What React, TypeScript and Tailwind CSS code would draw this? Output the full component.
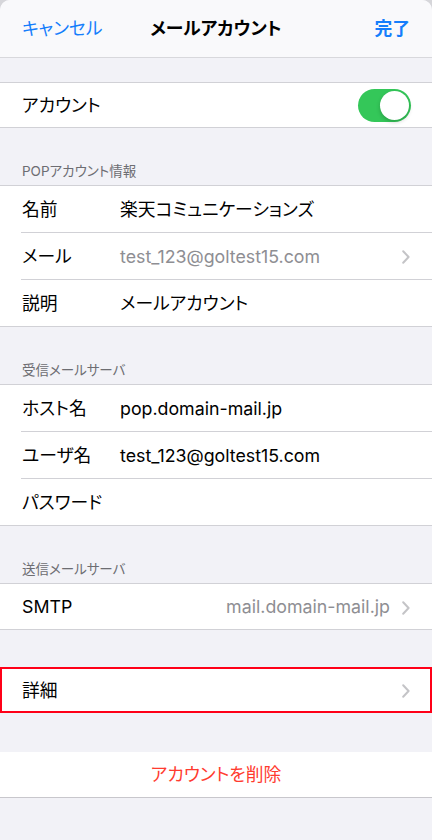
import React from "react";

const font = "[font-family:Inter,'Noto_Sans_CJK_JP',sans-serif] [font-feature-settings:'palt']";

function Chevron() {
  return (
    <svg width="8" height="14" viewBox="0 0 8 14" className="shrink-0">
      <path d="M1.2 1.2 L6.6 7 L1.2 12.8" fill="none" stroke="#c4c4c7" strokeWidth="2" strokeLinecap="round" strokeLinejoin="round" />
    </svg>
  );
}

function Row({ label, value, gray, chevron, last }: { label: string; value?: string; gray?: boolean; chevron?: boolean; last?: boolean }) {
  return (
    <div className="pl-[21px] bg-white">
      <div className={`flex items-center pr-[22px] pt-[2px] ${last ? "h-[46px]" : "h-[47px] border-b border-[#d1d1d6]"}`}>
        <div className="w-[99px] pl-px text-[17.8px] text-black shrink-0">{label}</div>
        <div className={`flex-1 text-[17.8px] ${gray ? "text-[#8e8e93]" : "text-black"}`}>{value}</div>
        {chevron && <Chevron />}
      </div>
    </div>
  );
}

function Header({ text }: { text: string }) {
  return (
    <div className="h-[57px] flex items-end pl-[22px] pb-[4px] text-[13.5px] text-[#6d6d72]">{text}</div>
  );
}

export default function App() {
  return (
    <div className={`w-[432px] h-[840px] bg-[#d6d6da] overflow-hidden ${font}`}>
      <div className="h-full bg-[#f2f2f7] rounded-t-[10px] overflow-hidden">
        <div className="h-[58px] bg-[#f9f9fb] border-b border-[#d8d8dc] grid grid-cols-[1fr_auto_1fr] items-center px-[22px] pt-[1px]">
          <span className="text-[17.8px] text-[#157efb]">キャンセル</span>
          <span className="text-[17.8px] font-bold text-black">メールアカウント</span>
          <span className="text-[17.8px] font-bold text-[#157efb] text-right">完了</span>
        </div>
        <div className="h-[24px]" />
        <div className="bg-white border-y border-[#d1d1d6]">
          <div className="h-[44px] flex items-center pl-[22px] pr-[21px]">
            <span className="flex-1 text-[17.8px] text-black pt-[2px]">アカウント</span>
            <div className="w-[53px] h-[33px] rounded-full bg-[#34c759] flex items-center justify-end pr-[2px]">
              <div className="w-[29px] h-[29px] rounded-full bg-white shadow-[0_2px_4px_rgba(0,0,0,0.2)]" />
            </div>
          </div>
        </div>
        <Header text="POPアカウント情報" />
        <div className="border-y border-[#d1d1d6]">
          <Row label="名前" value="楽天コミュニケーションズ" />
          <Row label="メール" value="test_123@goltest15.com" gray chevron />
          <Row label="説明" value="メールアカウント" last />
        </div>
        <Header text="受信メールサーバ" />
        <div className="border-y border-[#d1d1d6]">
          <Row label="ホスト名" value="pop.domain-mail.jp" />
          <Row label="ユーザ名" value="test_123@goltest15.com" />
          <Row label="パスワード" value="" last />
        </div>
        <Header text="送信メールサーバ" />
        <div className="border-y border-[#d1d1d6] bg-white">
          <div className="h-[45px] flex items-center pl-[22px] pr-[22px] pt-[2px]">
            <span className="flex-1 text-[17.8px] text-black">SMTP</span>
            <span className="text-[17.8px] text-[#8e8e93] mr-[12px]">mail.domain-mail.jp</span>
            <Chevron />
          </div>
        </div>
        <div className="h-[37px]" />
        <div className="h-[46px] bg-white border-2 border-[#ff0018] flex items-center pl-[20px] pr-[20px] pt-[2px]">
          <span className="flex-1 text-[17.8px] text-black">詳細</span>
          <Chevron />
        </div>
        <div className="h-[39px]" />
        <div className="bg-white border-b border-[#c8c7cc] h-[46px] flex items-center justify-center pt-[2px]">
          <span className="text-[17.8px] text-[#ff3b30]">アカウントを削除</span>
        </div>
      </div>
    </div>
  );
}
